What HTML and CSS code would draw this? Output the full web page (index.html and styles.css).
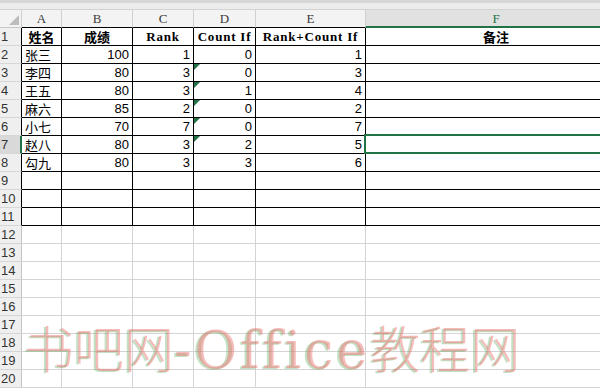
FILE: index.html
```html
<!DOCTYPE html>
<html lang="zh">
<head>
<meta charset="utf-8">
<title>Sheet</title>
<link rel="stylesheet" href="styles.css">
</head>
<body>
<div class="app">
  <div class="topbar"></div>
  <div class="sheet">
    <div class="c hd corner"></div>
    <div class="c hd kb">A</div>
    <div class="c hd kb">B</div>
    <div class="c hd kb">C</div>
    <div class="c hd kb">D</div>
    <div class="c hd kb">E</div>
    <div class="c hd csel">F</div>

    <div class="c rh rb">1</div>
    <div class="c b th">姓名</div>
    <div class="c b th">成绩</div>
    <div class="c b th lat">Rank</div>
    <div class="c b th lat">Count If</div>
    <div class="c b th lat">Rank+Count If</div>
    <div class="c b last th">备注</div>

    <div class="c rh rb">2</div>
    <div class="c b txt">张三</div>
    <div class="c b num">100</div>
    <div class="c b num">1</div>
    <div class="c b num">0</div>
    <div class="c b num">1</div>
    <div class="c b last"></div>

    <div class="c rh rb">3</div>
    <div class="c b txt">李四</div>
    <div class="c b num">80</div>
    <div class="c b num">3</div>
    <div class="c b num err">0</div>
    <div class="c b num">3</div>
    <div class="c b last"></div>

    <div class="c rh rb">4</div>
    <div class="c b txt">王五</div>
    <div class="c b num">80</div>
    <div class="c b num">3</div>
    <div class="c b num err">1</div>
    <div class="c b num">4</div>
    <div class="c b last"></div>

    <div class="c rh rb">5</div>
    <div class="c b txt">麻六</div>
    <div class="c b num">85</div>
    <div class="c b num">2</div>
    <div class="c b num err">0</div>
    <div class="c b num">2</div>
    <div class="c b last"></div>

    <div class="c rh rb">6</div>
    <div class="c b txt">小七</div>
    <div class="c b num">70</div>
    <div class="c b num">7</div>
    <div class="c b num err">0</div>
    <div class="c b num">7</div>
    <div class="c b last"></div>

    <div class="c rh rb rsel">7</div>
    <div class="c b txt">赵八</div>
    <div class="c b num">80</div>
    <div class="c b num">3</div>
    <div class="c b num err">2</div>
    <div class="c b num">5</div>
    <div class="c b last sel"></div>

    <div class="c rh rb">8</div>
    <div class="c b txt">勾九</div>
    <div class="c b num">80</div>
    <div class="c b num">3</div>
    <div class="c b num">3</div>
    <div class="c b num">6</div>
    <div class="c b last"></div>

    <div class="c rh rb">9</div>
    <div class="c b"></div><div class="c b"></div><div class="c b"></div><div class="c b"></div><div class="c b"></div><div class="c b last"></div>
    <div class="c rh rb">10</div>
    <div class="c b"></div><div class="c b"></div><div class="c b"></div><div class="c b"></div><div class="c b"></div><div class="c b last"></div>
    <div class="c rh rb">11</div>
    <div class="c b"></div><div class="c b"></div><div class="c b"></div><div class="c b"></div><div class="c b"></div><div class="c b last"></div>

    <div class="c rh">12</div>
    <div class="c"></div><div class="c"></div><div class="c"></div><div class="c"></div><div class="c"></div><div class="c last"></div>
    <div class="c rh">13</div>
    <div class="c"></div><div class="c"></div><div class="c"></div><div class="c"></div><div class="c"></div><div class="c last"></div>
    <div class="c rh">14</div>
    <div class="c"></div><div class="c"></div><div class="c"></div><div class="c"></div><div class="c"></div><div class="c last"></div>
    <div class="c rh">15</div>
    <div class="c"></div><div class="c"></div><div class="c"></div><div class="c"></div><div class="c"></div><div class="c last"></div>
    <div class="c rh">16</div>
    <div class="c"></div><div class="c"></div><div class="c"></div><div class="c"></div><div class="c"></div><div class="c last"></div>
    <div class="c rh">17</div>
    <div class="c"></div><div class="c"></div><div class="c"></div><div class="c"></div><div class="c"></div><div class="c last"></div>
    <div class="c rh">18</div>
    <div class="c"></div><div class="c"></div><div class="c"></div><div class="c"></div><div class="c"></div><div class="c last"></div>
    <div class="c rh">19</div>
    <div class="c"></div><div class="c"></div><div class="c"></div><div class="c"></div><div class="c"></div><div class="c last"></div>
    <div class="c rh">20</div>
    <div class="c"></div><div class="c"></div><div class="c"></div><div class="c"></div><div class="c"></div><div class="c last"></div>
  </div>
  <div class="watermark"><span class="cjk">书吧网</span><span class="lat-w">-Office</span><span class="cjk">教程网</span></div>
</div>
</body>
</html>
```

FILE: styles.css
```css
html, body {
  margin: 0;
  padding: 0;
  background: #fff;
  overflow: hidden;
}

.app {
  position: relative;
  width: 600px;
  height: 388px;
  overflow: hidden;
  font-family: "Liberation Sans", "Noto Sans CJK SC", sans-serif;
}

.topbar {
  height: 10px;
  box-sizing: border-box;
  background: linear-gradient(#d6d6d6 0, #d6d6d6 3px, #ececec 3px, #ececec 100%);
  border-bottom: 1px solid #d2d2d2;
}

.sheet {
  display: grid;
  grid-template-columns: 22px 40px 71px 61px 62px 110px 260px;
  grid-template-rows: repeat(21, 18px);
}

.c {
  position: relative;
  box-sizing: border-box;
  border-right: 1px solid #d4d4d4;
  border-bottom: 1px solid #d4d4d4;
  font-size: 13px;
  line-height: 17px;
  color: #000;
  white-space: nowrap;
  overflow: visible;
}

.hd {
  background: #f3f3f3;
  border-right-color: #d0d0d0;
  border-bottom-color: #c8c8c8;
  text-align: center;
  font-family: "Liberation Serif", serif;
  font-size: 13px;
  color: #3a3a3a;
}

.hd.kb {
  border-bottom-color: #000;
}

.corner::after {
  content: "";
  position: absolute;
  right: 2px;
  bottom: 2px;
  width: 0;
  height: 0;
  border-left: 10px solid transparent;
  border-bottom: 10px solid #bdbdbd;
}

.csel {
  background: #e1e1e1;
  color: #217346;
  border-bottom: 2px solid #217346;
  border-right: none;
}

.rh {
  background: #efefef;
  border-right-color: #c4c4c4;
  border-bottom-color: #d6d6d6;
  font-family: "Liberation Sans", sans-serif;
  font-size: 13px;
  color: #333;
  padding-left: 1px;
}

.rh.rb {
  border-right-color: #000;
}

.rh.rsel {
  background: #d9d9d9;
  border-right: 2px solid #217346;
}

.b {
  border-right-color: #000;
  border-bottom-color: #000;
}

.last {
  border-right: none;
}

.th {
  font-weight: bold;
  text-align: center;
  font-family: "Noto Sans CJK SC", sans-serif;
  font-size: 13px;
}

.th.lat {
  font-family: "Liberation Serif", "Noto Sans CJK SC", serif;
  letter-spacing: 0.8px;
}

.txt {
  padding-left: 3px;
  font-family: "Noto Sans CJK SC", sans-serif;
  line-height: 17px;
}

.num {
  text-align: right;
  padding-right: 3px;
}

.err::before {
  content: "";
  position: absolute;
  left: 0;
  top: 0;
  width: 0;
  height: 0;
  border-top: 6px solid #217346;
  border-right: 6px solid transparent;
}

.sel::after {
  content: "";
  position: absolute;
  left: -2px;
  top: -2px;
  right: -10px;
  bottom: -1px;
  border: 2px solid #217346;
}

.watermark {
  position: absolute;
  left: 24px;
  top: 316px;
  display: flex;
  align-items: baseline;
  font-size: 50px;
  line-height: 60px;
  color: rgba(238, 120, 120, 0.5);
  text-shadow: -2px 1px 0 rgba(90, 170, 90, 0.35);
  white-space: nowrap;
  pointer-events: none;
}

.watermark .cjk {
  font-family: "Noto Sans CJK SC", sans-serif;
  font-weight: 300;
}

.watermark .lat-w {
  font-family: "DejaVu Serif", "Liberation Serif", serif;
  font-weight: normal;
  font-size: 52px;
  letter-spacing: 3px;
}
```
